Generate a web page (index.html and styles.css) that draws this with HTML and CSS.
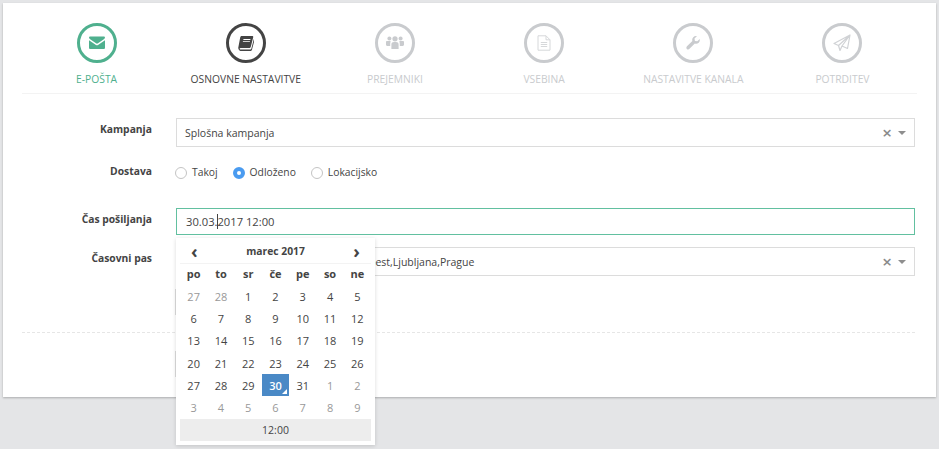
FILE: index.html
```html
<!DOCTYPE html>
<html lang="sl">
<head>
    <meta charset="UTF-8">
    <meta name="viewport" content="width=device-width, initial-scale=1.0">
    <title>Kampanja</title>
    <link rel="stylesheet" href="styles.css">
</head>
<body>
    <div class="card">
        <ul class="steps">
            <li class="step step-done">
                <span class="step-icon">
                    <svg viewBox="0 0 16 16" width="16" height="16"><path d="M0 2.6C0 1.9.6 1.4 1.3 1.4h13.4c.7 0 1.3.5 1.3 1.2 0 .6-.4 1-.8 1.3L8.6 8.6c-.4.2-.8.2-1.2 0L.8 3.9C.4 3.6 0 3.2 0 2.6zM0 5.3l7 4.7c.6.4 1.4.4 2 0l7-4.7v7.4c0 .8-.6 1.4-1.3 1.4H1.3C.6 14.1 0 13.5 0 12.7z"/></svg>
                </span>
                <span class="step-label">E-pošta</span>
            </li>
            <li class="step step-active">
                <span class="step-icon">
                    <svg viewBox="0 0 16 16" width="16" height="16"><path d="M3.6 1h10.6c.8 0 1.2.6 1 1.3l-2.4 9.5c-.2.8-.8 1.2-1.6 1.2H2.6c-.6 0-1 .4-.9.9.1.4.5.6 1 .6h9.6c.5 0 .9-.3 1-.7l2.5-9.6c.5.2.7.7.6 1.2l-2.4 9c-.2.9-1 1.6-2 1.6H2.400C1 15 0 13.8 .3 12.4L2.2 2.4C2.400 1.600 2.900 1 3.600 1zM5.500 4l-.2.9h7l.2-.9zM5 6.200l-.2.9h7l.2-.9z" fill-rule="evenodd"/></svg>
                </span>
                <span class="step-label">Osnovne nastavitve</span>
            </li>
            <li class="step">
                <span class="step-icon">
                    <svg viewBox="0 0 18 16" width="18" height="16"><circle cx="9" cy="3.8" r="2.6"/><circle cx="3.4" cy="3.6" r="2"/><circle cx="14.6" cy="3.6" r="2"/><path d="M5.4 14V9.4C5.4 7.7 6.5 7 8 7h2c1.500 0 2.600.7 2.600 2.400V14zM0 6.900C0 6.300.5 6 1.200 6h2.600c.6 0 .9.3 1 .6C4.300 7.200 4.200 8.300 4.200 9.800v1.200H1.300C.5 11 0 10.500 0 9.800zM18 6.900C18 6.300 17.500 6 16.800 6h-2.600c-.6 0-.9.3-1 .6.5.6.6 1.700.6 3.200v1.200h2.900c.8 0 1.300-.5 1.300-1.200z"/></svg>
                </span>
                <span class="step-label">Prejemniki</span>
            </li>
            <li class="step">
                <span class="step-icon">
                    <svg viewBox="0 0 14 16" width="14" height="16" fill="none" stroke="#d6d8da"><path d="M1 .8h8l4 4v10.400H1zM9 .8v4h4M3.800 7.500h6.400M3.800 9.500h6.400M3.800 11.500h6.400"/></svg>
                </span>
                <span class="step-label">Vsebina</span>
            </li>
            <li class="step">
                <span class="step-icon">
                    <svg viewBox="0 0 16 16" width="14" height="14"><path d="M15.700 3.500c.3 1.500-.1 3-1.200 4.100-1.200 1.200-2.900 1.500-4.400 1L4 14.700c-.9.900-2.200.9-3 .1s-.8-2.100.1-3L7.300 5.800C6.800 4.300 7.100 2.600 8.300 1.400 9.400.3 10.900-.1 12.400.2L9.700 2.900l.5 2.700 2.700.5z"/></svg>
                </span>
                <span class="step-label">Nastavitve kanala</span>
            </li>
            <li class="step">
                <span class="step-icon">
                    <svg viewBox="0 0 18 18" width="18" height="18" fill="none" stroke="#d0d2d5" stroke-width="1.200" stroke-linejoin="round"><path d="M17 1L1 9.500l4.500 2L17 1zM17 1l-2.500 13.500-5.500-2.500M5.500 11.500L7 16.500l2-4.500L17 1"/></svg>
                </span>
                <span class="step-label">Potrditev</span>
            </li>
        </ul>

        <form class="form">
            <div class="row row-kampanja">
                <label class="row-label">Kampanja</label>
                <div class="select">
                    <span class="select-value">Splošna kampanja</span>
                    <span class="select-clear">×</span>
                    <span class="select-arrow"></span>
                </div>
            </div>
            <div class="row row-dostava">
                <label class="row-label">Dostava</label>
                <div class="radios">
                    <span class="radio"><i class="radio-dot"></i>Takoj</span>
                    <span class="radio radio-on"><i class="radio-dot"></i>Odloženo</span>
                    <span class="radio"><i class="radio-dot"></i>Lokacijsko</span>
                </div>
            </div>
            <div class="row row-cas">
                <label class="row-label">Čas pošiljanja</label>
                <div class="date-field">
                    <div class="date-input">30.03.<span class="caret"></span>2017 12:00</div>
                    <div class="picker">
                        <div class="picker-head">
                            <span class="picker-nav">‹</span>
                            <span class="picker-month">marec 2017</span>
                            <span class="picker-nav">›</span>
                        </div>
                        <table class="picker-days">
                            <thead>
                                <tr><th>po</th><th>to</th><th>sr</th><th>če</th><th>pe</th><th>so</th><th>ne</th></tr>
                            </thead>
                            <tbody>
                                <tr><td class="old">27</td><td class="old">28</td><td>1</td><td>2</td><td>3</td><td>4</td><td>5</td></tr>
                                <tr><td>6</td><td>7</td><td>8</td><td>9</td><td>10</td><td>11</td><td>12</td></tr>
                                <tr><td>13</td><td>14</td><td>15</td><td>16</td><td>17</td><td>18</td><td>19</td></tr>
                                <tr><td>20</td><td>21</td><td>22</td><td>23</td><td>24</td><td>25</td><td>26</td></tr>
                                <tr><td>27</td><td>28</td><td>29</td><td class="today">30</td><td>31</td><td class="old">1</td><td class="old">2</td></tr>
                                <tr><td class="old">3</td><td class="old">4</td><td class="old">5</td><td class="old">6</td><td class="old">7</td><td class="old">8</td><td class="old">9</td></tr>
                            </tbody>
                        </table>
                        <div class="picker-time">12:00</div>
                    </div>
                </div>
            </div>
            <div class="row row-pas">
                <label class="row-label">Časovni pas</label>
                <div class="select">
                    <span class="select-value">(UTC+01:00) Belgrade,Bratislava,Budapest,Ljubljana,Prague</span>
                    <span class="select-clear">×</span>
                    <span class="select-arrow"></span>
                </div>
            </div>
            <div class="row row-btn">
                <div class="hidden-btn"></div>
            </div>
            <div class="divider"></div>
            <div class="row row-btn-2">
                <div class="hidden-btn"></div>
            </div>
        </form>
    </div>
</body>
</html>
```

FILE: styles.css
```css
html, body {
    margin: 0;
    height: 100%;
}

body {
    background: #e4e5e7;
    padding: 3px;
    box-sizing: border-box;
    overflow: hidden;
    font-family: "Open Sans", Arial, sans-serif;
    font-size: 10.5px;
    color: #444;
}

.card {
    background: #fff;
    width: 933px;
    height: 394px;
    box-sizing: border-box;
    padding: 0 19px 0 19px;
    box-shadow: 0 1px 2px rgba(0, 0, 0, 0.25);
}

/* wizard */
.steps {
    list-style: none;
    margin: 0;
    padding: 20px 0 0;
    display: flex;
    border-bottom: 1px solid #f3f3f3;
    height: 91px;
    box-sizing: border-box;
}

.step {
    flex: 1;
    display: flex;
    flex-direction: column;
    align-items: center;
    color: #c9cbce;
}

.step-icon {
    width: 40px;
    height: 40px;
    box-sizing: border-box;
    border: 3px solid #c9cbce;
    border-radius: 50%;
    display: flex;
    align-items: center;
    justify-content: center;
}

.step-icon svg {
    fill: #c9cbce;
}

.step-icon svg[fill="none"] {
    fill: none;
}

.step-label {
    margin-top: 8px;
    font-size: 10.3px;
    line-height: 16px;
    text-transform: uppercase;
    white-space: nowrap;
}

.step-done {
    color: #4fb08e;
}

.step-done .step-icon {
    border-color: #4fb08e;
}

.step-done .step-icon svg {
    fill: #4fb08e;
}

.step-active {
    color: #444;
}

.step-active .step-icon {
    border-color: #444;
}

.step-active .step-icon svg {
    fill: #444;
}

/* form */
.form {
    padding: 24px 2px 0 0;
}

.row {
    display: flex;
    align-items: flex-start;
}

.row-label {
    width: 130px;
    flex: none;
    margin-right: 24px;
    text-align: right;
    font-weight: 700;
    font-size: 10.3px;
    line-height: 16px;
}

.row-kampanja .row-label {
    padding-top: 3px;
}

.row-dostava {
    margin-top: 16px;
    height: 45px;
}

.row-cas .row-label {
    padding-top: 3px;
}

.row-pas {
    margin-top: 12px;
}

.row-pas .row-label {
    padding-top: 3px;
}

.select {
    flex: 1;
    height: 29px;
    box-sizing: border-box;
    border: 1px solid #dcdcdc;
    display: flex;
    align-items: center;
    padding: 0 8px 0 8px;
    line-height: 16px;
}

.select-value {
    flex: 1;
}

.select-clear {
    font-size: 17px;
    line-height: 15px;
    font-weight: 600;
    color: #8a8a8a;
    margin-right: 6px;
}

.select-arrow {
    width: 0;
    height: 0;
    margin-top: 1px;
    border-left: 4px solid transparent;
    border-right: 4px solid transparent;
    border-top: 4px solid #8e8e8e;
}

.radios {
    display: flex;
    gap: 15px;
    font-size: 10.3px;
    line-height: 16px;
    padding-top: 1px;
    margin-left: -1px;
}

.radio {
    display: flex;
    align-items: center;
}

.radio-dot {
    width: 12px;
    height: 12px;
    box-sizing: border-box;
    border: 1px solid #c4c4c4;
    border-radius: 50%;
    margin-right: 5px;
    margin-top: 1px;
}

.radio-on .radio-dot {
    border: 4px solid #4a9bf0;
    background: #fff;
}

.date-field {
    flex: 1;
    position: relative;
}

.date-input {
    height: 27px;
    box-sizing: border-box;
    border: 1px solid #62c0a0;
    padding-left: 9px;
    font-size: 11.2px;
    line-height: 26px;
}

.caret {
    display: inline-block;
    width: 1px;
    height: 15px;
    background: #444;
    vertical-align: -3px;
    margin-right: -1px;
}

.picker {
    position: absolute;
    z-index: 2;
    top: 30px;
    left: 0;
    width: 199px;
    height: 207px;
    box-sizing: border-box;
    padding: 0 4px;
    background: #fff;
    box-shadow: 0 1px 4px rgba(0, 0, 0, 0.15);
}

.picker-head {
    display: flex;
    align-items: center;
    justify-content: space-between;
    height: 25px;
    padding: 0 11px;
    border-bottom: 1px solid #f3f3f3;
}

.picker-nav {
    font-size: 18px;
    font-weight: 700;
    line-height: 18px;
}

.picker-month {
    font-weight: 700;
    font-size: 10.3px;
}

.picker-days {
    border-collapse: collapse;
    width: 191px;
    table-layout: fixed;
}

.picker-days th,
.picker-days td {
    padding: 0;
    height: 22.3px;
    text-align: center;
    font-size: 11px;
}

.picker-days th {
    height: 19px;
    padding-bottom: 2px;
    font-weight: 700;
}

.picker-days .old {
    color: #999;
}

.picker-days .today {
    position: relative;
    background: #4a89c6;
    color: #fff;
    font-weight: 600;
}

.picker-days .today::after {
    content: "";
    position: absolute;
    right: 2px;
    bottom: 2px;
    border-left: 5px solid transparent;
    border-bottom: 5px solid #fff;
}

.picker-time {
    background: #ededed;
    height: 22px;
    line-height: 22px;
    text-align: center;
}

.row-btn {
    margin-top: 13px;
    padding-left: 153px;
}

.row-btn-2 {
    margin-top: 18px;
    padding-left: 153px;
}

.hidden-btn {
    width: 120px;
    height: 26px;
    box-sizing: border-box;
    border: 1px solid #dcdcdc;
}

.divider {
    margin-top: 17px;
    border-top: 1px dashed #e6e6e6;
}
```
